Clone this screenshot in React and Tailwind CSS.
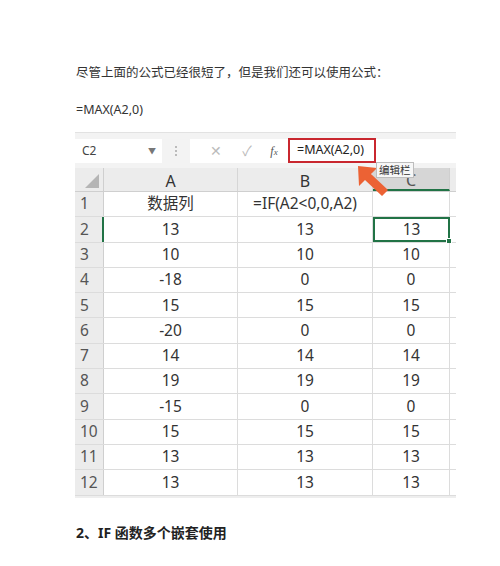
import React from "react";

const rows = [
  ["1", "数据列", "=IF(A2<0,0,A2)", ""],
  ["2", "13", "13", "13"],
  ["3", "10", "10", "10"],
  ["4", "-18", "0", "0"],
  ["5", "15", "15", "15"],
  ["6", "-20", "0", "0"],
  ["7", "14", "14", "14"],
  ["8", "19", "19", "19"],
  ["9", "-15", "0", "0"],
  ["10", "15", "15", "15"],
  ["11", "13", "13", "13"],
  ["12", "13", "13", "13"],
];

const font = { fontFamily: '"Noto Sans", "Noto Sans CJK SC", sans-serif' };

export default function App() {
  return (
    <div
      className="relative h-[566px] w-[500px] overflow-hidden bg-white text-[#333]"
      style={font}
    >
      <p className="pl-[76px] pt-[63px] text-[12.5px] leading-5 text-[#333]">
        尽管上面的公式已经很短了，但是我们还可以使用公式：
      </p>
      <p className="pl-[76px] pt-[17px] text-[12.5px] leading-5 text-[#333]">
        =MAX(A2,0)
      </p>

      {/* spreadsheet */}
      <div className="relative ml-[75px] mt-[12px] w-[381px]">
        {/* formula bar */}
        <div className="flex h-[34px] items-center border-t border-[#e2e2e2] bg-[#f3f3f3] pt-[2px]">
          <div className="flex h-[24px] w-[87px] items-center justify-between bg-white pl-[7px] pr-[6px] text-[12px] text-[#444]">
            <span>C2</span>
            <span className="text-[8px] text-[#777]">▼</span>
          </div>
          <div className="flex w-[28px] flex-col items-center gap-[2px]">
            <span className="h-[2px] w-[2px] bg-[#bbb]" />
            <span className="h-[2px] w-[2px] bg-[#bbb]" />
            <span className="h-[2px] w-[2px] bg-[#bbb]" />
          </div>
          <div className="flex h-[24px] flex-1 items-center bg-white">
            <span className="ml-[12px] w-[28px] text-center text-[14px] text-[#bbb]">✕</span>
            <span className="ml-[3px] w-[28px] text-center text-[14px] text-[#bbb]">✓</span>
            <span
              className="ml-[1px] w-[24px] text-center text-[12px] italic text-[#555]"
              style={{ fontFamily: '"Liberation Serif", serif' }}
            >
              f<span className="text-[9px]">x</span>
            </span>
            <div className="ml-[2px] flex h-[25px] w-[88px] items-center border-2 border-[#c9272f] pl-[7px] text-[12.5px] text-[#222]">
              =MAX(A2,0)
            </div>
          </div>
        </div>
        <div className="h-[2px] bg-[#f3f3f3]" />

        {/* header row */}
        <div className="flex h-[24px] border-b border-[#cfcfcf] bg-[#ececec] text-[16px] text-[#333]">
          <div className="relative w-[29px] border-r border-[#cfcfcf]">
            <svg className="absolute bottom-[3px] right-[4px]" width="14" height="14">
              <polygon points="14,0 14,14 0,14" fill="#b5b5b5" />
            </svg>
          </div>
          <div className="flex w-[134px] items-center justify-center border-r border-[#d6d6d6] pt-[3px]">A</div>
          <div className="flex w-[135px] items-center justify-center border-r border-[#d6d6d6] pt-[3px]">B</div>
          <div className="flex w-[77px] items-center justify-center border-b-2 border-r border-[#217346] border-r-[#cfcfcf] bg-[#d6d6d6] pt-[3px] text-[#555]">C</div>
        </div>

        {/* body */}
        {rows.map((r) => {
          const sel = r[0] === "2";
          return (
            <div key={r[0]} className="flex h-[25.3px] border-b border-[#dcdcdc] text-[15.5px] leading-none">
              <div
                className={
                  "flex w-[29px] items-center bg-[#ececec] pl-[5px] text-[#555] " +
                  (sel ? "border-r-2 border-[#217346]" : "border-r border-[#cfcfcf]")
                }
              >
                {r[0]}
              </div>
              <div className="flex w-[134px] items-center justify-center border-r border-[#dcdcdc]">{r[1]}</div>
              <div className="flex w-[135px] items-center justify-center border-r border-[#dcdcdc]">{r[2]}</div>
              <div
                className={
                  "relative flex w-[77px] items-center justify-center " +
                  (sel ? "border-2 border-[#217346]" : "border-r border-[#dcdcdc]")
                }
              >
                {r[3]}
                {sel && (
                  <span className="absolute -bottom-[4px] -right-[4px] h-[6px] w-[6px] border border-white bg-[#217346]" />
                )}
              </div>
            </div>
          );
        })}
        <div className="h-[2px] bg-[#eeeeee]" />

        {/* callout arrow */}
        <svg className="absolute left-[280px] top-[31px]" width="36" height="34" viewBox="0 0 36 34">
          <polygon
            points="3,3 22,5 16,11 33,27 27,33 10,17 4,23"
            fill="#ec6234"
          />
        </svg>
        <div className="absolute left-[301px] top-[30px] border border-[#bdbdbd] bg-[#f7f7f7] px-[2px] text-[10.5px] leading-[14px] text-[#333]">
          编辑栏
        </div>
      </div>

      <h2 className="pl-[76px] pt-[25px] text-[14px] font-bold leading-5 text-[#222]">
        2、IF 函数多个嵌套使用
      </h2>
      <p className="pl-[76px] pt-[22px] text-[12.5px] leading-5 text-[#444]">
        例如，根据得分判断，根据分数范围给出等级，计算出对应的级别名称等。
      </p>
    </div>
  );
}
